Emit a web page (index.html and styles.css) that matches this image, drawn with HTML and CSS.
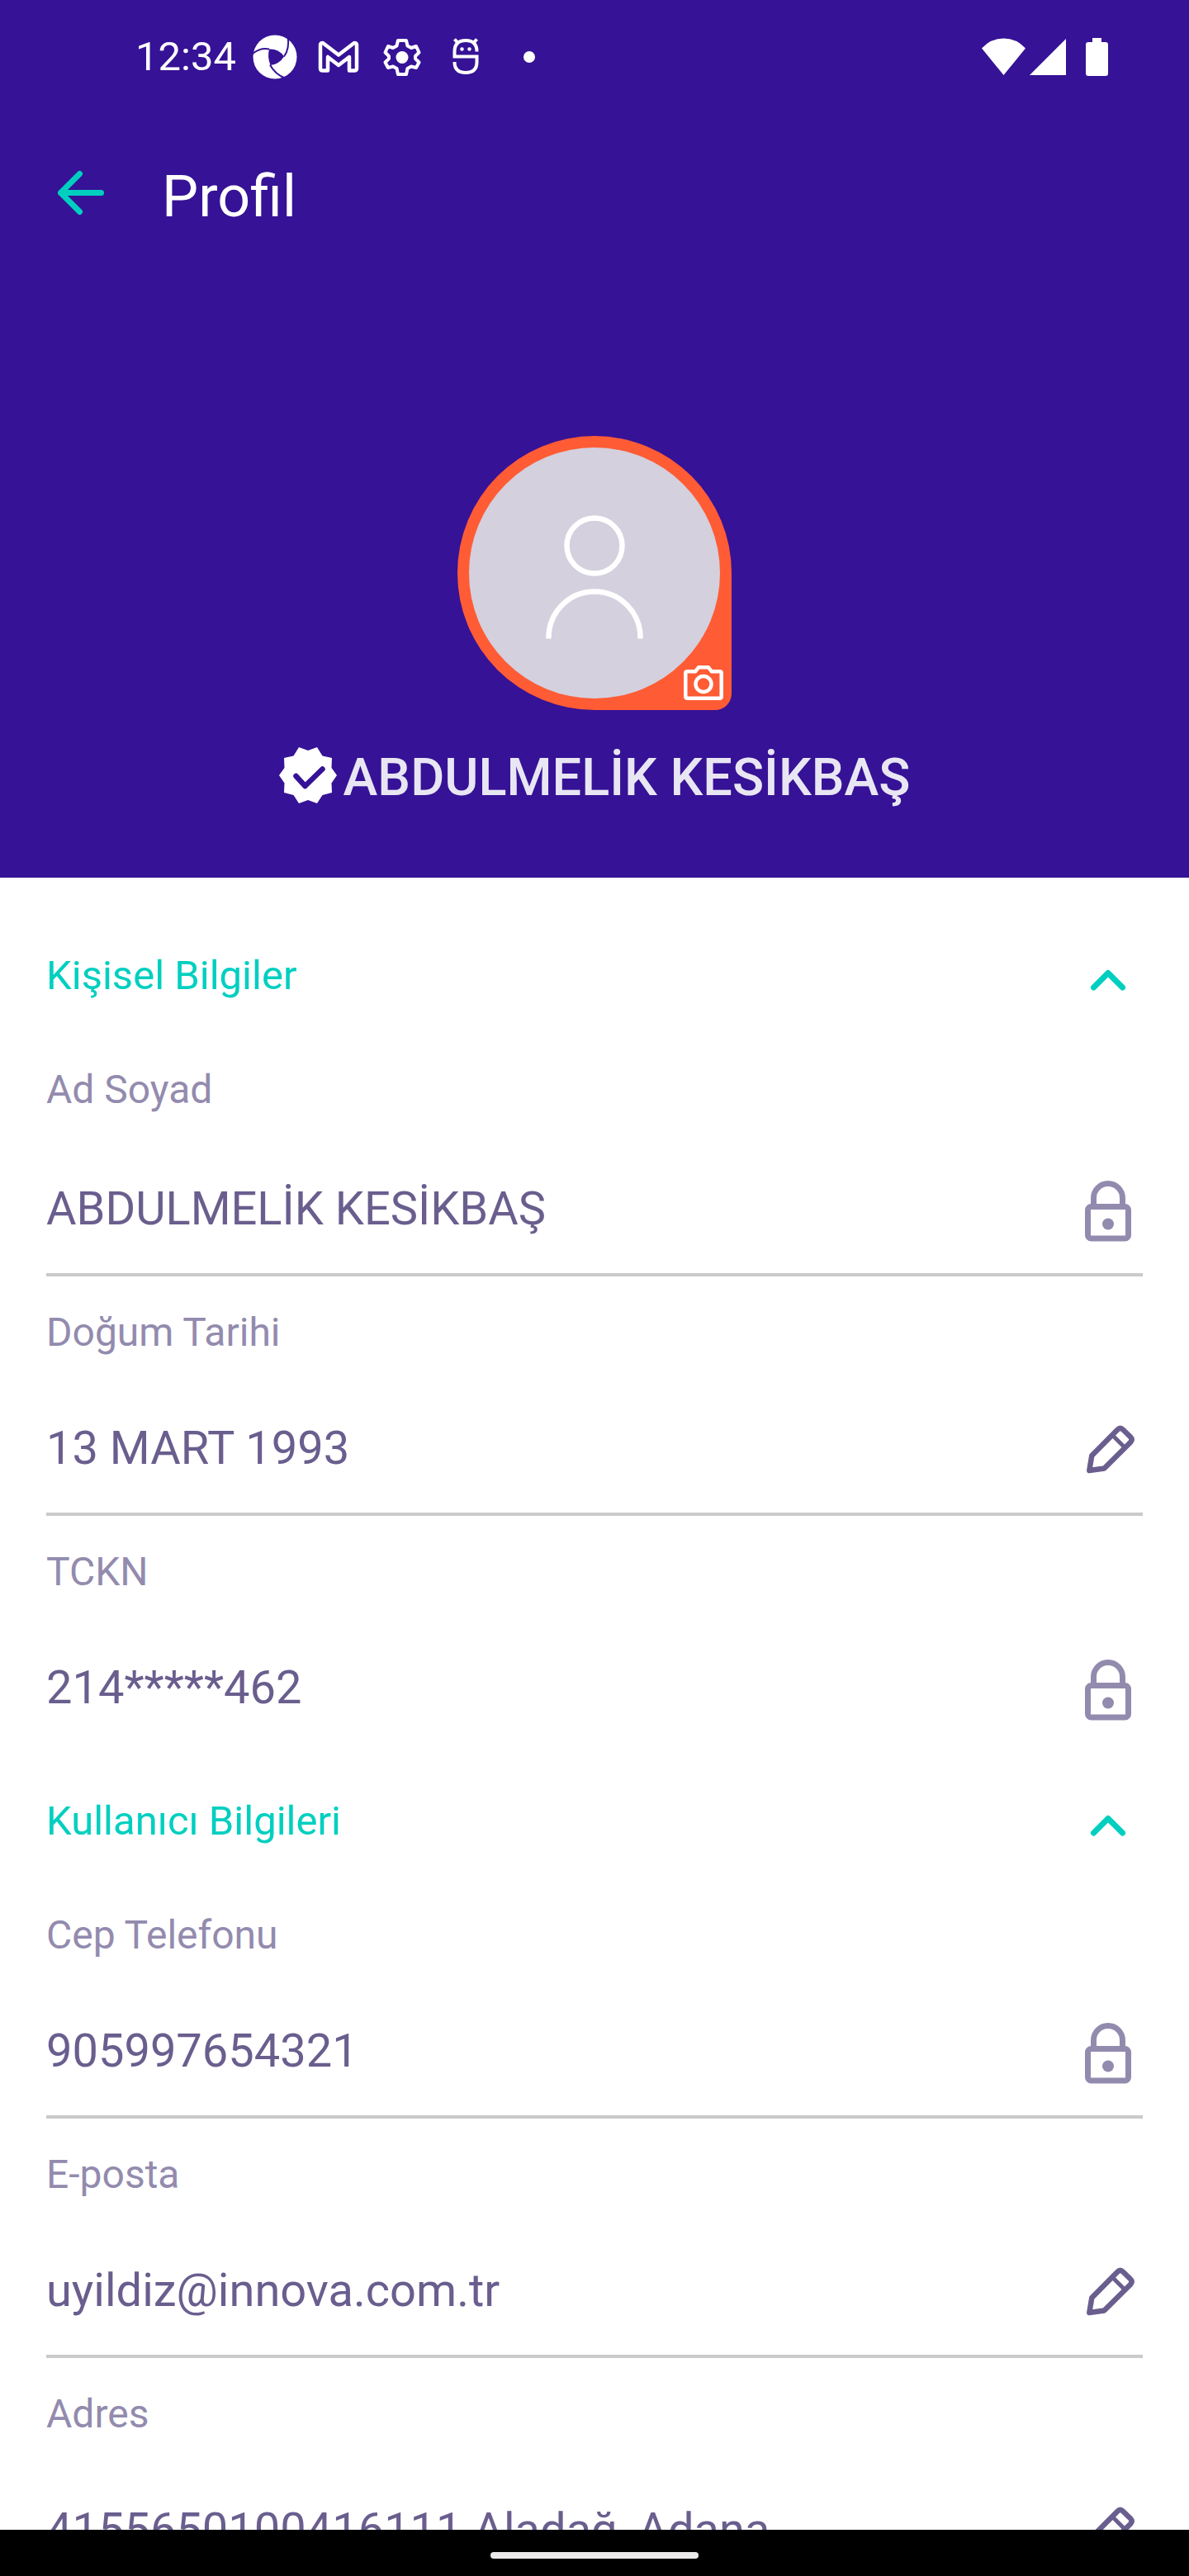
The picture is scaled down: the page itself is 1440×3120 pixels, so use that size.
FILE: index.html
```html
<!DOCTYPE html>
<html lang="tr">
<head>
<meta charset="utf-8">
<meta name="viewport" content="width=device-width, initial-scale=1">
<title>Profil</title>
<link rel="stylesheet" href="styles.css">
</head>
<body>
<svg class="defs" aria-hidden="true">
  <symbol id="lock" viewBox="0 0 84 84">
    <g fill="none" stroke="currentColor" stroke-width="7">
      <rect x="17.500" y="39.500" width="49" height="38.500" rx="4"/>
      <path d="M24.500 39V29a17.500 17.500 0 0 1 35 0V39"/>
    </g>
    <circle cx="42" cy="60.500" r="7" fill="currentColor"/>
  </symbol>
  <symbol id="pencil" viewBox="0 0 84 84">
    <g fill="none" stroke="currentColor" stroke-width="6.500" stroke-linejoin="round">
      <path d="M22.300 51 53.500 19.500Q56.700 16.300 60 19.500L69 28.300Q72.200 31.500 69 35L37.300 66.500 19.300 69Z"/>
      <path d="M47.500 26.500 61.500 40.500" stroke-width="5"/>
    </g>
  </symbol>
  <symbol id="chevron" viewBox="0 0 84 84">
    <path d="M24.500 56 42 38.500 59.500 56" fill="none" stroke="currentColor" stroke-width="7" stroke-linecap="round" stroke-linejoin="round"/>
  </symbol>
</svg>
<div class="app">
  <header class="hero">
    <div class="status">
      <time class="clock">12:34</time>
      <div class="notices">
        <svg class="notice" viewBox="0 0 54 54">
          <circle cx="27" cy="27" r="26.500" fill="#fff"/>
          <g fill="none" stroke="#361296" stroke-width="2">
            <path d="M0 23Q9 15.500 20 17.500"/>
            <path d="M42.500 1Q45 17 38 26.500"/>
            <path d="M21 36.500Q27 48 40 53"/>
          </g>
          <path d="M20 17.500Q32 17 38 26.500Q32 36 21.500 37Q17.500 27 20 17.500Z" fill="#361296"/>
        </svg>
        <svg class="notice" viewBox="0 0 54 54">
          <path d="M5 12.500Q5 10 8 10L27 24.500 46 10Q49 10 49 12.500V41Q49 43.500 46 43.500H40V27L27 37 14 27V43.500H8Q5 43.500 5 41Z" fill="none" stroke="#fff" stroke-width="4.500" stroke-linejoin="round"/>
        </svg>
        <svg class="notice" viewBox="0 0 54 54">
          <path d="M22 7H32L33.500 13.500 38 16 44 14 47.500 21.500 43 26V29L47.500 33.500 44 40 38 38.500 33.500 41 32 48H22L20.500 41 16 38.500 10 40 6.500 33.500 11 29V26L6.500 21.500 10 14 16 16 20.500 13.500Z" fill="none" stroke="#fff" stroke-width="4" stroke-linejoin="round"/>
          <circle cx="27" cy="27.500" r="7.500" fill="#fff"/>
        </svg>
        <svg class="notice" viewBox="0 0 54 54">
          <g fill="none" stroke="#fff" stroke-width="4">
            <path d="M40.500 20.500Q40.500 7 27 7T13.500 20.500V26.500H40.500V33Q40.500 46 27 46T13.500 33"/>
            <path d="M13.500 5.500 18 10.500M40.500 5.500 36 10.500"/>
          </g>
          <circle cx="22.500" cy="17.500" r="2.200" fill="#fff"/><circle cx="31.500" cy="17.500" r="2.200" fill="#fff"/>
        </svg>
        <svg class="notice" viewBox="0 0 54 54"><circle cx="27" cy="27" r="7" fill="#fff"/></svg>
      </div>
      <svg class="radio" viewBox="0 0 102 46" fill="#fff">
        <path d="M0 12.500Q11 .500 26.500 .500T53 12.500L26.500 45Z"/>
        <path d="M102 1V45H58Z"/>
      </svg>
      <svg class="battery" viewBox="0 0 27 46" fill="#fff">
        <path d="M8 0H19V5H24Q27 5 27 8V43Q27 46 24 46H3Q0 46 0 43V8Q0 5 3 5H8Z"/>
      </svg>
    </div>
    <nav class="toolbar">
      <button class="back" type="button" aria-label="Geri">
        <svg viewBox="0 0 84 84"><path d="M40.500 14.500 17.500 37.500 40.500 60.500M17.500 37.500H66.500" fill="none" stroke="#00cfc0" stroke-width="7" stroke-linecap="round" stroke-linejoin="round"/></svg>
      </button>
      <h1 class="title" lang="en">Profil</h1>
    </nav>
    <div class="avatar">
      <svg class="person" viewBox="0 0 304 304" fill="none" stroke="#fff" stroke-width="6.500">
        <circle cx="152" cy="119" r="33.500"/>
        <path d="M96.500 231.500V230a55.500 55.500 0 0 1 111 0V231.500"/>
      </svg>
      <button class="camera" type="button" aria-label="Fotoğrafı değiştir">
        <svg viewBox="0 0 48 42" fill="none" stroke="#fff" stroke-width="4.500" stroke-linejoin="round">
          <path d="M4.500 7.300H14L18 2.300H30L34 7.300H43.500Q45.700 7.300 45.700 9.500V37.500Q45.700 39.700 43.500 39.700H4.500Q2.300 39.700 2.300 37.500V9.500Q2.300 7.300 4.500 7.300Z"/>
          <circle cx="24" cy="22.500" r="9.500"/>
        </svg>
      </button>
    </div>
    <div class="identity">
      <svg class="badge" viewBox="0 0 70 70">
        <path d="M35 5 46 1 52.500 11.500 64 14 63.500 26 70 35 63.500 44.500 64 56 52.500 59 46 69 35 65 24 69 17.500 59 6 56 6.500 44.500 0 35 6.500 26 6 14 17.500 11.500 24 1Z" fill="#fff"/>
        <path d="M20.500 36 31.500 48 52.500 27.500" fill="none" stroke="#361296" stroke-width="6.500" stroke-linecap="round" stroke-linejoin="round"/>
      </svg>
      <p class="name">ABDULMELİK KESİKBAŞ</p>
    </div>
  </header>
  <main class="content">
    <section class="group">
      <div class="group-head">
        <h2 class="group-title">Kişisel Bilgiler</h2>
        <button class="icon" type="button" aria-label="Kişisel Bilgiler bölümünü daralt"><svg><use href="#chevron"/></svg></button>
      </div>
      <div class="field field-name">
        <label class="label" for="ad">Ad Soyad</label>
        <div class="row"><input class="value" id="ad" value="ABDULMELİK KESİKBAŞ" readonly><span class="icon icon-muted"><svg><use href="#lock"/></svg></span></div>
      </div>
      <div class="field">
        <label class="label" for="dogum">Doğum Tarihi</label>
        <div class="row"><input class="value" id="dogum" value="13 MART 1993"><button class="icon" type="button" aria-label="Doğum tarihini düzenle"><svg><use href="#pencil"/></svg></button></div>
      </div>
      <div class="field">
        <label class="label" for="tckn">TCKN</label>
        <div class="row"><input class="value" id="tckn" value="214*****462" readonly><span class="icon icon-muted"><svg><use href="#lock"/></svg></span></div>
      </div>
    </section>
    <section class="group">
      <div class="group-head">
        <h2 class="group-title">Kullanıcı Bilgileri</h2>
        <button class="icon" type="button" aria-label="Kullanıcı Bilgileri bölümünü daralt"><svg><use href="#chevron"/></svg></button>
      </div>
      <div class="field">
        <label class="label" for="tel">Cep Telefonu</label>
        <div class="row"><input class="value" id="tel" type="tel" value="905997654321" readonly><span class="icon icon-muted"><svg><use href="#lock"/></svg></span></div>
      </div>
      <div class="field">
        <label class="label" for="eposta">E-posta</label>
        <div class="row"><input class="value" id="eposta" type="email" value="uyildiz@innova.com.tr"><button class="icon" type="button" aria-label="E-postayı düzenle"><svg><use href="#pencil"/></svg></button></div>
      </div>
      <div class="field">
        <label class="label" for="adres">Adres</label>
        <div class="row"><input class="value" id="adres" value="4155650100416111 Aladağ, Adana"><button class="icon" type="button" aria-label="Adresi düzenle"><svg><use href="#pencil"/></svg></button></div>
      </div>
    </section>
  </main>
  <footer class="navbar"><span class="pill"></span></footer>
</div>
</body>
</html>
```

FILE: styles.css
```css
* {
  box-sizing: border-box;
}

body {
  margin: 0;
  background: #fff;
  font-family: Roboto, sans-serif;
}

h1, h2, p {
  margin: 0;
  font-weight: 400;
}

button {
  padding: 0;
  border: 0;
  background: none;
  color: inherit;
  cursor: pointer;
}

svg {
  display: block;
}

.defs {
  display: none;
}

.app {
  display: flex;
  flex-direction: column;
  height: 100vh;
}

/* Purple header */
.hero {
  flex: none;
  display: flex;
  flex-direction: column;
  align-items: center;
  padding-bottom: 83px;
  background: #361296;
  color: #fff;
}

.status {
  align-self: stretch;
  display: flex;
  align-items: center;
  height: 138px;
  padding: 0 98px 0 164px;
}

.clock {
  font-size: 49px;
  line-height: 56px;
}

.notices {
  display: flex;
  gap: 23px;
  margin: 0 auto 0 20px;
}

.notice {
  width: 54px;
  height: 54px;
}

.radio {
  width: 102px;
  height: 46px;
  margin-right: 24px;
}

.battery {
  width: 27px;
  height: 46px;
}

.toolbar {
  align-self: stretch;
  display: flex;
  align-items: center;
  gap: 56px;
  height: 200px;
  padding: 0 56px;
}

.back svg {
  width: 84px;
  height: 84px;
}

.title {
  font-size: 70px;
  line-height: 84px;
}

.avatar {
  position: relative;
  width: 332px;
  height: 332px;
  margin-top: 190px;
  padding: 14px;
  border-radius: 166px 166px 20px 166px;
  background: #ff5c35;
}

.person {
  width: 304px;
  height: 304px;
  border-radius: 50%;
  background: #d4d0de;
}

.camera {
  position: absolute;
  right: 10px;
  bottom: 12px;
}

.camera svg {
  width: 48px;
  height: 42px;
}

.identity {
  display: flex;
  align-items: flex-start;
  gap: 8px;
  margin-top: 44px;
}

.badge {
  width: 70px;
  height: 70px;
}

.name {
  color: #e9e6f4;
  font-size: 63px;
  font-weight: 500;
  line-height: 76px;
}

/* Form */
.content {
  flex: 1;
  min-height: 0;
  overflow-y: auto;
  padding: 35px 56px 0;
  scrollbar-width: none;
  color: #6a5e8e;
}

.group {
  padding-top: 42px;
}

.group-head {
  display: flex;
  align-items: center;
  justify-content: space-between;
  margin-bottom: 28px;
  color: #00cfc0;
}

.group-title {
  font-size: 49px;
  line-height: 84px;
}

.field {
  display: flex;
  flex-direction: column;
  gap: 70px;
  padding: 40px 0 36px;
  border-bottom: 4px solid #cacaca;
}

.field-name {
  gap: 74px;
}

.field:last-child {
  border-bottom: 0;
}

.label {
  color: #938bae;
  font-size: 48px;
  line-height: 56px;
}

.row {
  display: flex;
  align-items: center;
}

.value {
  flex: 1;
  min-width: 0;
  height: 84px;
  padding: 0;
  border: 0;
  outline: 0;
  background: none;
  color: inherit;
  font: inherit;
  font-size: 56px;
}

.icon {
  flex: none;
}

.icon svg {
  width: 84px;
  height: 84px;
}

.icon-muted {
  color: #938bae;
}

/* System gesture bar */
.navbar {
  flex: none;
  display: flex;
  align-items: center;
  justify-content: center;
  height: 56px;
  padding-top: 6px;
  background: #000;
}

.pill {
  width: 252px;
  height: 8px;
  border-radius: 4px;
  background: #ebe9e9;
}
```
